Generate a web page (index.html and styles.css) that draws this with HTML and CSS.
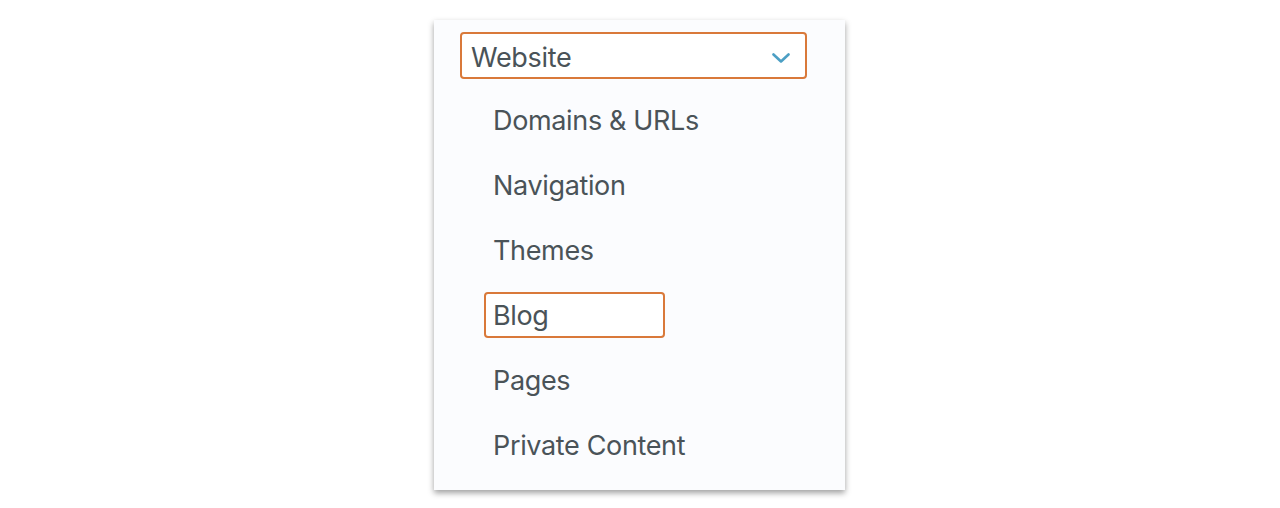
FILE: index.html
```html
<!DOCTYPE html>
<html>
<head>
<meta charset="utf-8">
<link rel="stylesheet" href="styles.css">
</head>
<body>
<div class="panel">
  <div class="select">
    <span class="select-label">Website</span>
    <svg class="chevron" width="18" height="10" viewBox="0 0 18 10"><path d="M1.5 1.5 L9 8.5 L16.5 1.5" fill="none" stroke="#4c9fc4" stroke-width="2.6" stroke-linecap="round" stroke-linejoin="round"/></svg>
  </div>
  <ul class="menu">
    <li class="item">Domains &amp; URLs</li>
    <li class="item">Navigation</li>
    <li class="item">Themes</li>
    <li class="item focused">Blog</li>
    <li class="item">Pages</li>
    <li class="item">Private Content</li>
  </ul>
</div>
</body>
</html>
```
FILE: styles.css
```css
html, body {
  margin: 0;
  padding: 0;
  background: #ffffff;
}
body {
  min-height: 508px;
  padding-top: 20px;
  box-sizing: border-box;
  font-family: Inter, "Noto Sans", sans-serif;
  color: #4a5358;
}
.panel {
  box-sizing: border-box;
  margin: 0 0 0 434px;
  width: 411px;
  height: 470px;
  background: #fbfcfe;
  box-shadow: 0 3px 6px rgba(0,0,0,0.38);
  padding: 12px 38px 0 26px;
}
.select {
  box-sizing: border-box;
  height: 47px;
  border: 2px solid #d9793a;
  border-radius: 4px;
  background: #ffffff;
  display: flex;
  align-items: center;
  justify-content: space-between;
  padding: 3px 15px 0 9px;
}
.select-label {
  font-size: 27px;
  letter-spacing: -0.3px;
}
.chevron {
  display: block;
  margin-top: 1px;
}
.menu {
  list-style: none;
  margin: 18px 0 0 24px;
  padding: 0;
  display: flex;
  flex-direction: column;
  gap: 19px;
}
.item {
  box-sizing: border-box;
  height: 46px;
  width: 181px;
  display: flex;
  align-items: center;
  padding-left: 7px;
  border: 2px solid transparent;
  border-radius: 4px;
  font-size: 27px;
  letter-spacing: -0.35px;
  white-space: nowrap;
}
.item.focused {
  border-color: #d9793a;
  background: #ffffff;
}
```
